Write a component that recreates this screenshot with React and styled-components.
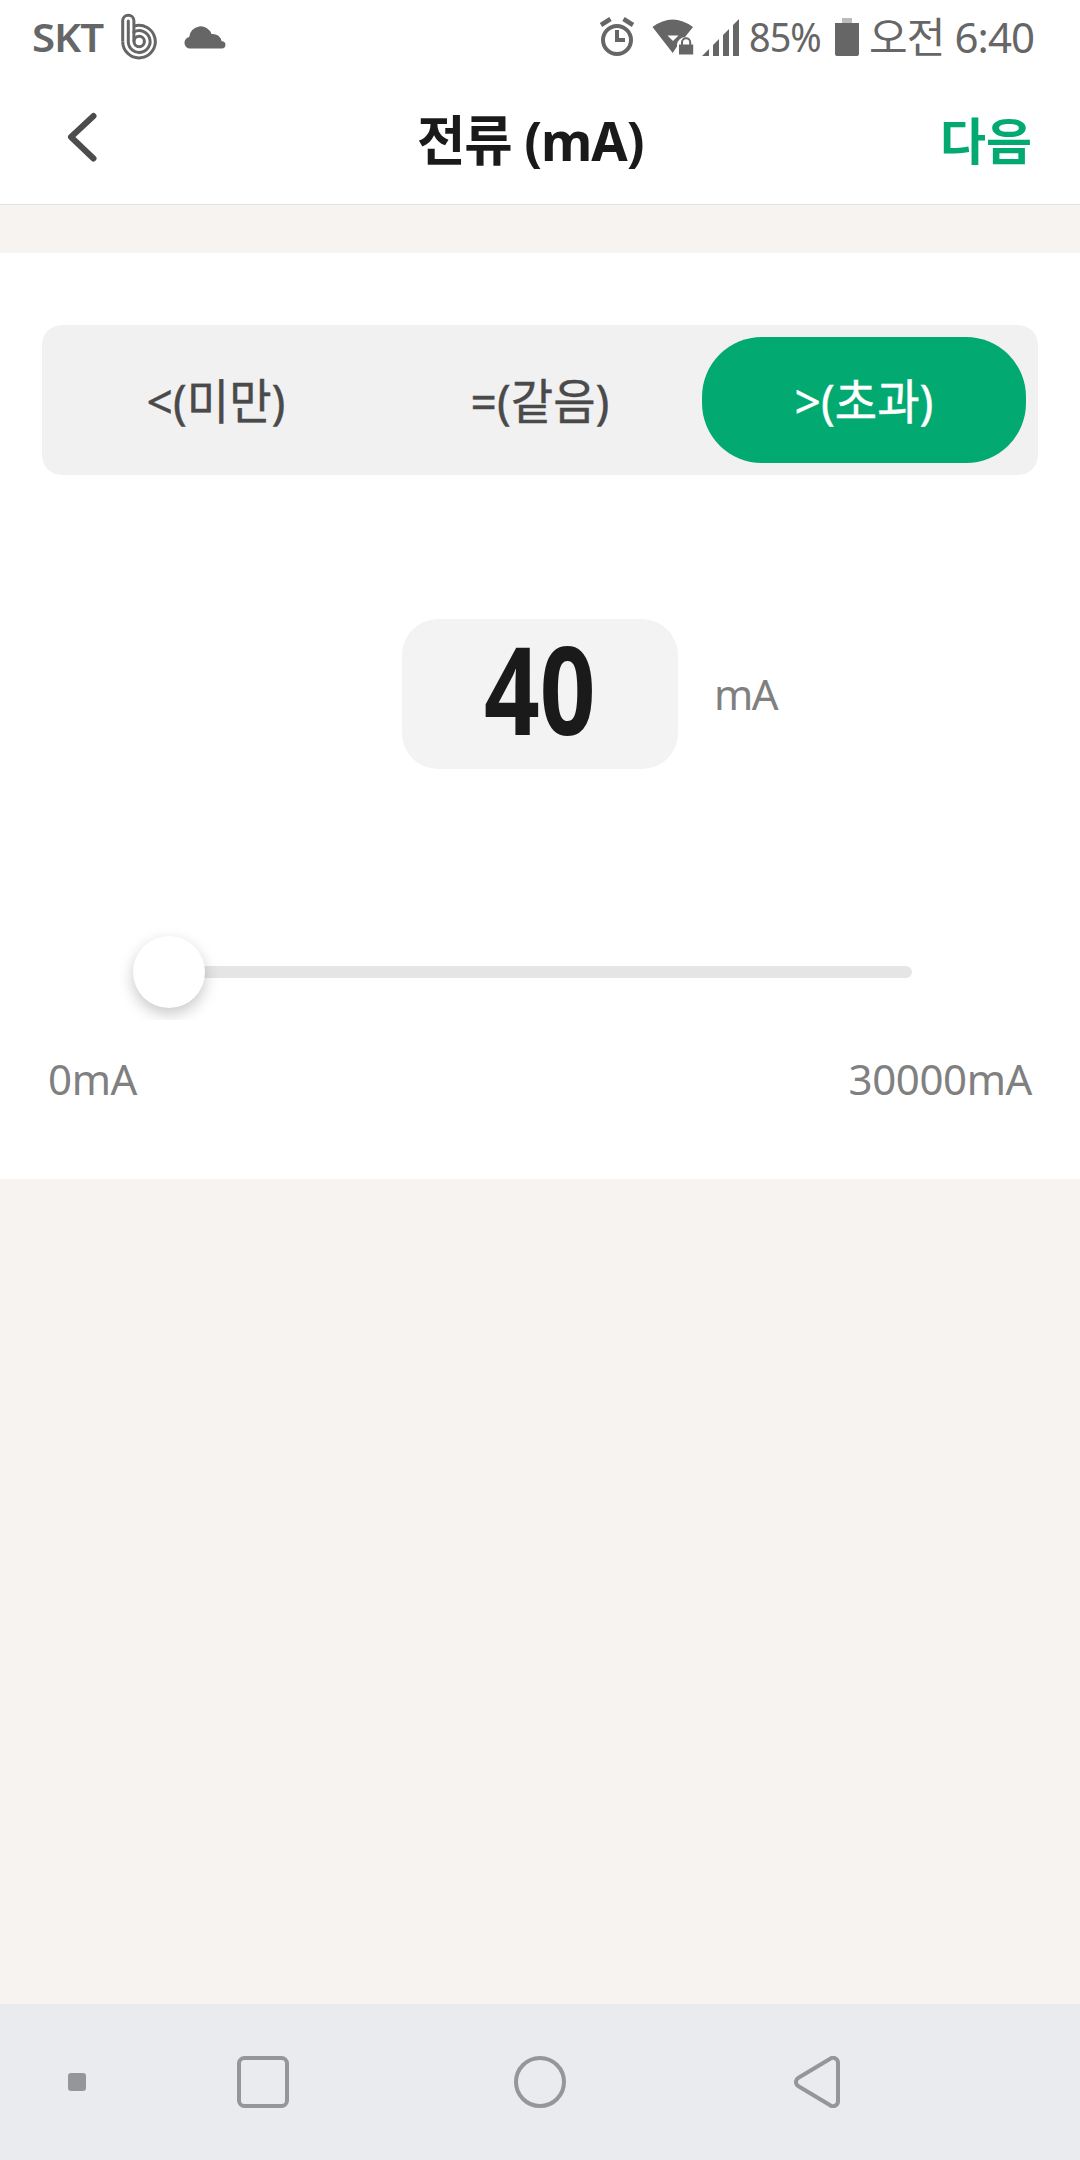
import React, { useState } from 'react';
import styled, { createGlobalStyle } from 'styled-components';

const tabs = [
  { id: 'lt', label: '<(미만)' },
  { id: 'eq', label: '=(같음)' },
  { id: 'gt', label: '>(초과)' },
];

const min = 0;
const max = 30000;

const StatusBar = () => (
  <Status>
    <StatusText $weight={600} $width={76} $stretch={1.05}>SKT</StatusText>
    <Glyph $left={11} width="40" height="50" viewBox="119 11 40 50" fill="none" stroke="#666" strokeWidth="3">
      <path d="M122.7 40.5V19.8a5.6 5.6 0 0 1 11.2 0V40.5" />
      <path d="M122.7 40.5a16.3 16.3 0 1 0 11.2-15.4" />
      <path d="M128.3 20v20.5a10.9 10.9 0 1 0 5.6-9.5" strokeLinecap="round" />
      <circle cx="139.2" cy="40.5" r="5.2" />
    </Glyph>
    <Glyph $left={25} width="42" height="24" viewBox="184 22 42 24" fill="#666">
      <path d="M190 45.6a5.8 5.8 0 0 1-.8-11.5A11.5 11.5 0 0 1 211.5 31a9 9 0 0 1 10.2 7.2a3.7 3.7 0 0 1 .1 7.4z" />
    </Glyph>
    <Spacer />
    <Glyph $left={0} width="36" height="40" viewBox="599 17 36 40" fill="none" stroke="#666">
      <circle cx="617" cy="40" r="14" strokeWidth="4" />
      <path d="M617 30v10h8" strokeWidth="4" />
      <path d="M601 25l9.5-6M633 25l-9.5-6" strokeWidth="4.5" />
    </Glyph>
    <Glyph $left={17} width="42" height="36" viewBox="652 18.5 42 36" fill="#666">
      <path d="M652.5 26.5q20-15 40.5 0L685 36.5q-7 1-8 7.5v2l-4.3 6.5z" />
      <path d="M667.5 35h11l-5.5 5.5z" fill="#fff" />
      <path d="M679 44h14.2v10H679z" />
      <path d="M682 45v-3.2a4.1 4.1 0 0 1 8.2 0V45" fill="none" stroke="#666" strokeWidth="2" />
    </Glyph>
    <Glyph $left={8} width="38" height="37" viewBox="702 17 38 37" fill="#666">
      <path d="M702 54l7-7v7zM713 54V43l6-6v17zM723 54V33l6-6v27zM733 54V23l6-6v37z" />
    </Glyph>
    <StatusText $left={9} $width={79} $stretch={0.945}>85%</StatusText>
    <Glyph $left={7} width="24" height="38" viewBox="835 17 24 38">
      <path d="M842 17h10v5h-10z" fill="#bbb" />
      <path d="M835 22h24v31a2 2 0 0 1-2 2h-20a2 2 0 0 1-2-2z" fill="#666" />
    </Glyph>
    <StatusText $left={10} $width={169} $size={42} $spacing={-0.9}>오전 6:40</StatusText>
  </Status>
);

const App = () => {
  const [active, setActive] = useState('gt');
  const [value] = useState(40);
  return (
    <>
      <GlobalStyle />
      <Screen>
        <StatusBar />
        <Header>
          <BackButton aria-label="back">
            <svg width="32" height="52" viewBox="0 0 32 52" fill="none" stroke="#4c4c4c" strokeWidth="6" strokeLinecap="round" strokeLinejoin="round">
              <path d="M27.5 5L5 26l22.5 21.5" />
            </svg>
          </BackButton>
          <Title>전류 (mA)</Title>
          <NextButton>다음</NextButton>
        </Header>

        <Panel>
          <Tabs>
            {tabs.map((tab) => (
              <Tab key={tab.id} $active={tab.id === active} onClick={() => setActive(tab.id)}>
                <TabLabel>{tab.label}</TabLabel>
              </Tab>
            ))}
          </Tabs>

          <ValueRow>
            <ValueBox>
              <span>{value}</span>
            </ValueBox>
            <Unit>mA</Unit>
          </ValueRow>

          <Slider>
            <Track>
              <Thumb style={{ marginLeft: `${((value - min) / (max - min)) * 100}%` }} />
            </Track>
          </Slider>

          <Range>
            <span>{min}mA</span>
            <span>{max}mA</span>
          </Range>
        </Panel>

        <NavBar>
          <svg width="18" height="18">
            <rect width="18" height="18" rx="3" fill="#959698" />
          </svg>
          <svg width="52" height="52" fill="none" stroke="#959698" strokeWidth="4">
            <rect x="2" y="2" width="48" height="48" rx="5.5" />
          </svg>
          <svg width="52" height="52" fill="none" stroke="#959698" strokeWidth="4">
            <circle cx="26" cy="26" r="24" />
          </svg>
          <svg width="46" height="52" fill="none" stroke="#959698" strokeWidth="4">
            <path d="M36.2 2.7L4.5 21.7a4.9 4.9 0 0 0 0 8.6L36.2 49.3a5 5 0 0 0 7.8-4.3V7a5 5 0 0 0-7.8-4.3z" />
          </svg>
        </NavBar>
      </Screen>
    </>
  );
};

const GlobalStyle = createGlobalStyle`
  * {
    box-sizing: border-box;
  }
  body {
    margin: 0;
    font-family: "Noto Sans", "Noto Sans CJK KR", sans-serif;
  }
  button {
    border: 0;
    padding: 0;
    background: none;
    font-family: inherit;
  }
  svg {
    display: block;
    flex: none;
  }
`;

const Screen = styled.div`
  display: flex;
  flex-direction: column;
  width: 1080px;
  height: 2160px;
  background: #f7f3f0;
`;

// Status bar
const Status = styled.div`
  display: flex;
  align-items: center;
  height: 74px;
  padding: 0 42px 0 32px;
  background: #fff;
`;

const StatusText = styled.span`
  width: ${({ $width }) => $width}px;
  margin-left: ${({ $left = 0 }) => $left}px;
  color: #666;
  font-size: ${({ $size = 40 }) => $size}px;
  font-weight: ${({ $weight = 400 }) => $weight};
  line-height: 74px;
  letter-spacing: ${({ $spacing = -1 }) => $spacing}px;
  white-space: nowrap;
  transform: scaleX(${({ $stretch = 1 }) => $stretch});
  transform-origin: left center;
`;

const Glyph = styled.svg`
  margin-left: ${({ $left }) => $left}px;
`;

const Spacer = styled.div`
  flex: 1;
`;

// Header
const Header = styled.header`
  display: grid;
  grid-template-columns: 200px 1fr 200px;
  align-items: center;
  height: 131px;
  border-bottom: 1px solid #e1e0e0;
  background: #fff;
`;

const BackButton = styled.button`
  padding: 0 0 4px 66px;
`;

const Title = styled.h1`
  margin: 0;
  padding: 1px 20px 0 0;
  color: #1a1a1a;
  font-size: 54px;
  font-weight: 700;
  line-height: 80px;
  letter-spacing: -1.1px;
  text-align: center;
  white-space: nowrap;
  transform: scaleX(0.975);
`;

const NextButton = styled.button`
  padding: 4px 48px 0 0;
  color: #02a971;
  font-size: 50px;
  font-weight: 700;
  line-height: 80px;
  text-align: right;
`;

// Condition panel
const Panel = styled.main`
  height: 926px;
  margin-top: 48px;
  padding: 72px 42px 0;
  background: #fff;
`;

const Tabs = styled.div`
  display: grid;
  grid-template-columns: repeat(3, 1fr);
  height: 150px;
  padding: 12px;
  border-radius: 20px;
  background: #f1f1f1;
`;

const Tab = styled.button`
  padding-top: 2px;
  border-radius: 60px;
  background: ${({ $active }) => ($active ? '#02a971' : 'transparent')};
  color: ${({ $active }) => ($active ? '#fff' : '#4a4a4a')};
`;

const TabLabel = styled.span`
  display: block;
  font-size: 48px;
  line-height: 66px;
  -webkit-text-stroke: 0.4px currentColor;
  transform: scaleX(0.96);
`;

const ValueRow = styled.div`
  display: flex;
  align-items: center;
  margin: 144px 0 0 360px;
`;

const ValueBox = styled.div`
  display: flex;
  align-items: center;
  justify-content: center;
  width: 276px;
  height: 150px;
  padding-bottom: 12px;
  border-radius: 36px;
  background: #f3f3f3;
  span {
    color: #1a1a1a;
    font-size: 122px;
    font-weight: 700;
    line-height: 138px;
    transform: scaleX(0.8);
  }
`;

const Unit = styled.span`
  margin-left: 36px;
  padding-bottom: 2px;
  color: #808080;
  font-size: 42px;
  letter-spacing: -1.6px;
`;

const Slider = styled.div`
  height: 96px;
  margin: 155px 54px 0;
  padding: 42px 72px;
  overflow: hidden;
`;

const Track = styled.div`
  display: flex;
  align-items: center;
  height: 12px;
  border-radius: 6px;
  background: #e5e5e5;
`;

const Thumb = styled.div`
  flex: none;
  width: 72px;
  height: 72px;
  border-radius: 50%;
  background: #fff;
  box-shadow: 0 6px 15px rgba(0, 0, 0, 0.22);
  transform: translateX(-50%);
`;

const Range = styled.div`
  display: flex;
  justify-content: space-between;
  margin-top: 29px;
  padding: 0 6px;
  color: #808080;
  font-size: 42px;
  line-height: 60px;
  letter-spacing: -0.4px;
`;

const NavBar = styled.nav`
  display: grid;
  grid-template-columns: 169px 277px 280px 46px;
  align-items: center;
  height: 156px;
  margin-top: auto;
  padding-left: 68px;
  background: #e9ebee;
`;

export default App;
